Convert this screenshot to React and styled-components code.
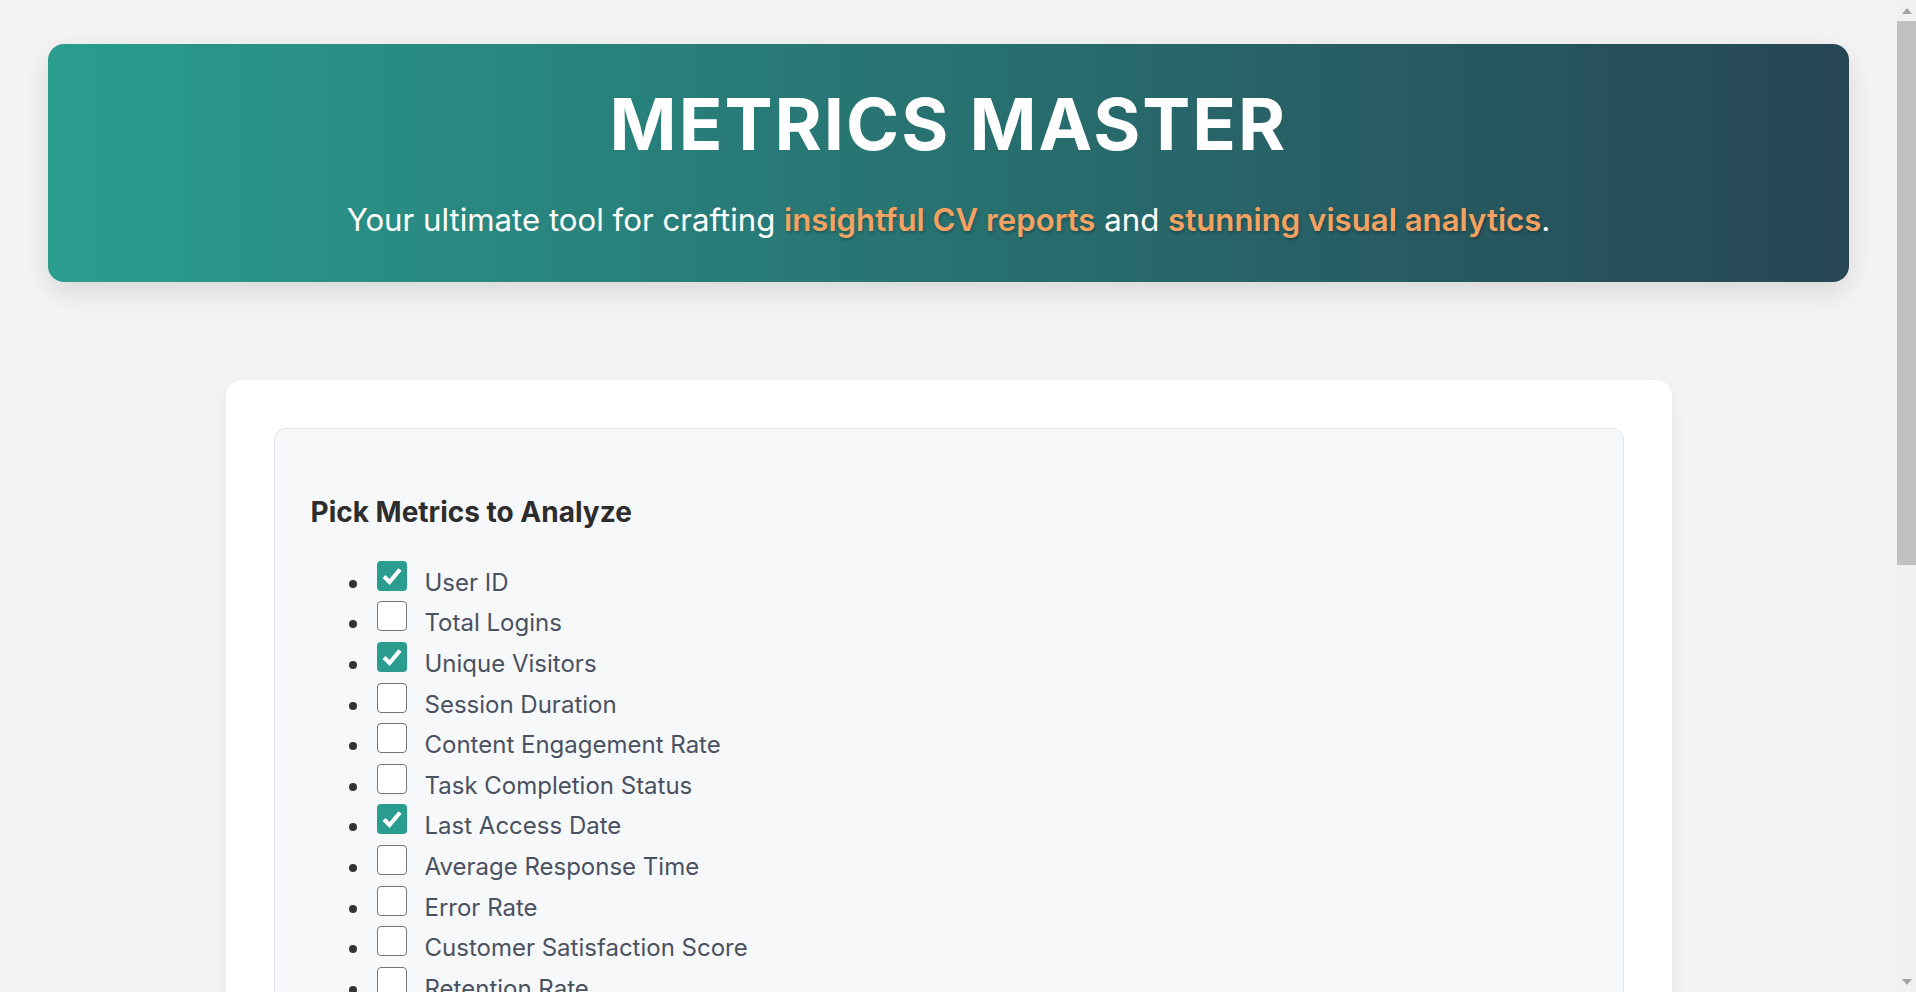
import styled, { createGlobalStyle } from 'styled-components';

const GlobalStyle = createGlobalStyle`
    * {
        box-sizing: border-box;
    }
    body {
        margin: 0 19px 0 0;
        background: #f4f4f4;
        font-family: Inter, 'Noto Sans', 'Liberation Sans', sans-serif;
        color: #333;
    }
`;

// the browser's scrollbar is not painted in the screenshot, so draw one
const ScrollTrack = styled.div`
    position: fixed;
    top: 0;
    right: 0;
    width: 19px;
    height: 100vh;
    display: flex;
    flex-direction: column;
    background: #f1f1f1;
`;

const ScrollArrow = styled.div`
    height: 21px;
    display: flex;
    align-items: center;
    justify-content: center;
    &::before {
        content: '';
        border-left: 5.5px solid transparent;
        border-right: 5.5px solid transparent;
        ${(props) => (props.down ? 'border-top' : 'border-bottom')}: 6px solid #a3a3a3;
    }
`;

const ScrollThumb = styled.div`
    height: 544px;
    background: #c1c1c1;
`;

const ScrollRest = styled.div`
    flex: 1;
`;

const Page = styled.div`
    padding: 44px 48px 80px;
`;

const Hero = styled.header`
    padding: 37px 24px 38px;
    border-radius: 16px;
    background: linear-gradient(90deg, #2a9d8f 0%, #264653 100%);
    box-shadow: 0 10px 30px rgba(0, 0, 0, 0.12);
    text-align: center;
    color: #fff;
`;

const Title = styled.h1`
    margin: 0;
    font-size: 72px;
    font-weight: 700;
    line-height: 1.2;
    letter-spacing: 2px;
`;

const Tagline = styled.p`
    margin: 30px 0 0;
    font-size: 31.2px;
    line-height: 1.5;
    font-weight: 400;
`;

const Accent = styled.span`
    color: #f4a261;
    font-weight: 600;
    text-shadow: 1px 2px 3px rgba(0, 0, 0, 0.25);
`;

const Card = styled.main`
    max-width: 1446px;
    margin: 98px auto 0;
    padding: 48px;
    background: #fff;
    border-radius: 16px;
    box-shadow: 0 6px 24px rgba(0, 0, 0, 0.06);
`;

const Panel = styled.section`
    padding: 36px;
    background: #f7f8fa;
    border: 1px solid #e1e4e8;
    border-radius: 12px;
`;

const PanelTitle = styled.h2`
    margin: 31px 0 31px;
    font-size: 28px;
    font-weight: 700;
    line-height: 1.2;
    color: #2d2d2d;
`;

const MetricList = styled.ul`
    margin: 0;
    padding-left: 60px;
`;

const MetricItem = styled.li`
    font-size: 24px;
    color: #333;
    margin-bottom: 4.6px;
`;

const Box = styled.span`
    display: inline-block;
    overflow: hidden;
    width: 30px;
    height: 30px;
    margin: 0 18px 0 6px;
    vertical-align: baseline;
    border-radius: 4px;
    border: ${(props) => (props.checked ? 'none' : '1.5px solid #767676')};
    background: ${(props) => (props.checked ? '#2a9d8f' : '#fff')};
`;

const Check = styled.svg`
    display: block;
`;

const MetricName = styled.span`
    color: #4a5160;
`;

const Actions = styled.div`
    display: flex;
    gap: 16px;
    margin-top: 40px;
`;

const Button = styled.button`
    padding: 16px 32px;
    font-family: inherit;
    font-size: 20px;
    font-weight: 600;
    color: #fff;
    background: ${(props) => (props.secondary ? '#264653' : '#2a9d8f')};
    border: none;
    border-radius: 10px;
    cursor: pointer;
`;

const Footer = styled.footer`
    margin-top: 64px;
    text-align: center;
    font-size: 18px;
    line-height: 24px;
    color: #888;
`;

const metrics = [
    { name: 'User ID', checked: true },
    { name: 'Total Logins', checked: false },
    { name: 'Unique Visitors', checked: true },
    { name: 'Session Duration', checked: false },
    { name: 'Content Engagement Rate', checked: false },
    { name: 'Task Completion Status', checked: false },
    { name: 'Last Access Date', checked: true },
    { name: 'Average Response Time', checked: false },
    { name: 'Error Rate', checked: false },
    { name: 'Customer Satisfaction Score', checked: false },
    { name: 'Retention Rate', checked: false },
    { name: 'Churn Rate', checked: false },
    { name: 'Conversion Rate', checked: false },
    { name: 'Bounce Rate', checked: false },
    { name: 'Page Views', checked: false },
    { name: 'Revenue per User', checked: false },
    { name: 'Active Sessions', checked: false },
    { name: 'Feature Adoption Rate', checked: false },
    { name: 'Net Promoter Score', checked: false },
    { name: 'Average Order Value', checked: false },
];

const Checkbox = ({ checked }) => (
    <Box checked={checked} role="checkbox" aria-checked={checked}>
        {checked && (
            <Check width="30" height="30" viewBox="0 0 30 30">
                <path
                    d="M7 15.5 L12.5 21 L23 8.5"
                    fill="none"
                    stroke="#fff"
                    strokeWidth="4.2"
                    strokeLinejoin="miter"
                />
            </Check>
        )}
    </Box>
);

const App = () => {
    return (
        <>
            <GlobalStyle />
            <Page>
                <Hero>
                    <Title>METRICS MASTER</Title>
                    <Tagline>
                        Your ultimate tool for crafting <Accent>insightful CV reports</Accent> and{' '}
                        <Accent>stunning visual analytics</Accent>.
                    </Tagline>
                </Hero>
                <Card>
                    <Panel>
                        <PanelTitle>Pick Metrics to Analyze</PanelTitle>
                        <MetricList>
                            {metrics.map((metric) => (
                                <MetricItem key={metric.name}>
                                    <Checkbox checked={metric.checked} />
                                    <MetricName>{metric.name}</MetricName>
                                </MetricItem>
                            ))}
                        </MetricList>
                        <Actions>
                            <Button>Generate Report</Button>
                            <Button secondary>Build Charts</Button>
                        </Actions>
                    </Panel>
                </Card>
                <Footer>Metrics Master · Crafted for data-driven reporting</Footer>
            </Page>
            <ScrollTrack aria-hidden="true">
                <ScrollArrow />
                <ScrollThumb />
                <ScrollRest />
                <ScrollArrow down />
            </ScrollTrack>
        </>
    );
};

export default App;
